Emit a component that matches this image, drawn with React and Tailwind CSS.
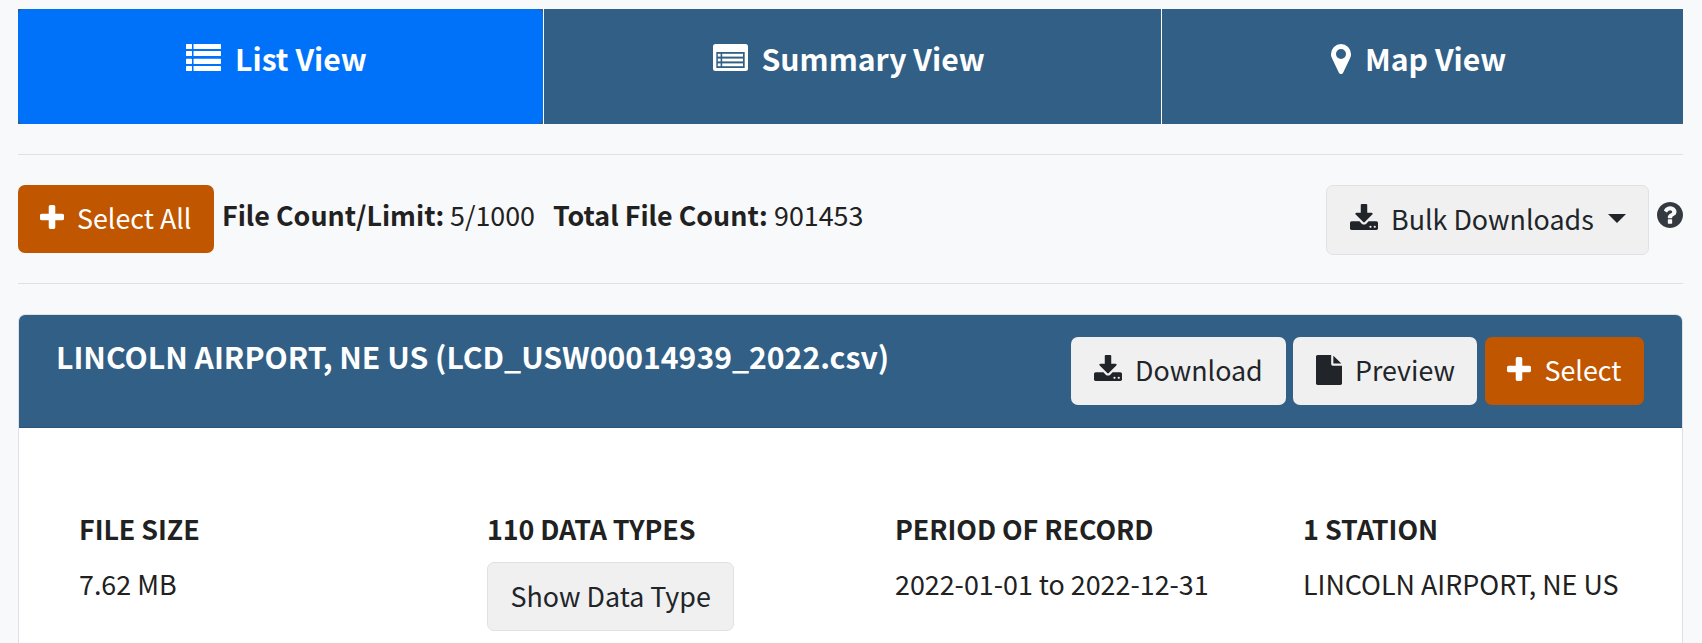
import React from "react";

const PATHS = {
  download:
    "M1344 1344q0-26-19-45t-45-19-45 19-19 45 19 45 45 19 45-19 19-45zm256 0q0-26-19-45t-45-19-45 19-19 45 19 45 45 19 45-19 19-45zm128-224v320q0 40-28 68t-68 28h-1472q-40 0-68-28t-28-68v-320q0-40 28-68t68-28h465l135 136q58 56 136 56t136-56l136-136h464q40 0 68 28t28 68zm-325-569q17 41-14 70l-448 448q-18 19-45 19t-45-19l-448-448q-31-29-14-70 17-39 59-39h256v-448q0-26 19-45t45-19h256q26 0 45 19t19 45v448h256q42 0 59 39z",
  plus: "M1600 736v192q0 40-28 68t-68 28h-416v416q0 40-28 68t-68 28h-192q-40 0-68-28t-28-68v-416h-416q-40 0-68-28t-28-68v-192q0-40 28-68t68-28h416v-416q0-40 28-68t68-28h192q40 0 68 28t28 68v416h416q40 0 68 28t28 68z",
  question:
    "M1024 1376v-192q0-14-9-23t-23-9h-192q-14 0-23 9t-9 23v192q0 14 9 23t23 9h192q14 0 23-9t9-23zm256-672q0-88-55.5-163t-138.5-116-170-41q-243 0-371 213-15 24 8 42l132 100q7 6 19 6 16 0 25-12 53-68 86-92 34-24 86-24 48 0 85.5 26t37.5 59q0 38-20 61t-68 45q-63 28-115.5 86.5t-52.5 125.5v36q0 14 9 23t23 9h192q14 0 23-9t9-23q0-19 21.5-49.5t54.5-49.5q32-18 49-28.5t46-35 44.5-48 28-60.5 12.5-81zm384 192q0 209-103 385.5t-279.5 279.5-385.5 103-385.5-103-279.5-279.5-103-385.5 103-385.5 279.5-279.5 385.5-103 385.5 103 279.5 279.5 103 385.5z",
  marker:
    "M1152 640q0-106-75-181t-181-75-181 75-75 181 75 181 181 75 181-75 75-181zm256 0q0 109-33 179l-364 774q-16 33-47.5 52t-67.5 19-67.5-19-46.5-52l-365-774q-33-70-33-179 0-212 150-362t362-150 362 150 150 362z",
  file: "M1152 512v-472q22 14 36 28l408 408q14 14 28 36h-472zm-128 32q0 40 28 68t68 28h544v1056q0 40-28 68t-68 28h-1344q-40 0-68-28t-28-68v-1600q0-40 28-68t68-28h800v544z",
};

const BOX = {
  download: "64 0 1664 1536",
  plus: "192 128 1408 1408",
  question: "128 128 1536 1536",
  marker: "384 128 1024 1536",
  file: "128 0 1536 1792",
};

function Icon({ name, className }) {
  return (
    <svg viewBox={BOX[name]} preserveAspectRatio="none" fill="currentColor" className={`block shrink-0 ${className}`} aria-hidden="true">
      <path d={PATHS[name]} />
    </svg>
  );
}

function ListIcon() {
  return (
    <svg viewBox="0 0 35 27" fill="currentColor" className="block h-[27px] w-[35px] shrink-0" aria-hidden="true">
      {[0, 7, 14.8, 22].map((y) => (
        <g key={y}>
          <rect x="0" y={y} width="6" height="5.1" rx="0.6" />
          <rect x="7.5" y={y} width="27.5" height="5.1" rx="0.6" />
        </g>
      ))}
    </svg>
  );
}

function ListAltIcon() {
  return (
    <svg viewBox="0 0 35 27" fill="currentColor" className="block h-[27px] w-[35px] shrink-0" aria-hidden="true">
      <path fillRule="evenodd" d="M2.5 0h30a2.5 2.5 0 0 1 2.5 2.5v22a2.5 2.5 0 0 1-2.5 2.5h-30a2.5 2.5 0 0 1-2.5-2.5v-22a2.5 2.5 0 0 1 2.5-2.5zM3.3 8v16h28.4v-16z" />
      {[9.8, 14.6, 19.4].map((y) => (
        <g key={y}>
          <rect x="4.8" y={y} width="2.8" height="2.8" />
          <rect x="9.2" y={y} width="20.8" height="2.8" />
        </g>
      ))}
    </svg>
  );
}

const FIELD = "text-[26.85px] leading-[40px] whitespace-nowrap";

export default function App() {
  return (
    <div className="h-[643px] w-[1702px] overflow-hidden bg-[#f8f9fb] px-[18px] pt-[9px] pr-[19px] font-['Noto_Sans_CJK_JP','Noto_Sans',sans-serif] text-[#212121]">
      <nav className="flex h-[115px] gap-px bg-white text-[30.2px] leading-[42px] font-bold whitespace-nowrap text-white">
        <div className="w-[525px] bg-[#315f86]">
          <a className="flex h-full rounded-[6px] bg-[#0072f9] pt-[35px] pl-[168px]">
            <ListIcon />
            <span className="-mt-[7px] ml-[14px]">List View</span>
          </a>
        </div>
        <a className="flex w-[617px] bg-[#315f86] pt-[35px] pl-[169px]">
          <ListAltIcon />
          <span className="-mt-[7px] ml-[13.5px]">Summary View</span>
        </a>
        <a className="flex flex-1 bg-[#315f86] pt-[35px] pl-[169px]">
          <Icon name="marker" className="h-[30px] w-[20px]" />
          <span className="-mt-[7px] ml-[14px]">Map View</span>
        </a>
      </nav>

      <div className="mt-[30px] flex h-[130px] items-start border-y border-[#dee2e6] pt-[30px]">
        <button className="flex h-[68px] w-[196px] rounded-[7px] bg-[#c15600] pl-[22px] text-white">
          <Icon name="plus" className="mt-[20px] h-[24px] w-[24px]" />
          <span className={`${FIELD} mt-[13px] ml-[13px]`}>Select All</span>
        </button>
        <div className={`${FIELD} mt-[10px] ml-[8px] flex`}>
          <b className="w-[228px]">File Count/Limit:</b>
          <span className="w-[103px]">5/1000</span>
          <b className="w-[221px]">Total File Count:</b>
          <span>901453</span>
        </div>
        <button className="ml-auto flex h-[70px] w-[323px] rounded-[7px] border border-[#dee2e6] bg-[#f0f0f0] pl-[23px] text-[#212529]">
          <Icon name="download" className="mt-[18px] h-[26px] w-[28px]" />
          <span className={`${FIELD} mt-[13px] ml-[13px] w-[202px]`}>Bulk Downloads</span>
          <svg viewBox="0 0 18 9" className="mt-[28px] ml-[15px] h-[9px] w-[18px]" fill="currentColor" aria-hidden="true">
            <path d="M0 0h18l-9 9z" />
          </svg>
        </button>
        <Icon name="question" className="mt-[17px] ml-[8px] h-[26px] w-[26px] text-[#343a40]" />
      </div>

      <section className="mt-[30px] h-[400px] overflow-hidden rounded-t-[7px] border border-[#dee0e3] bg-white">
        <header className="flex h-[113px] items-start border-b border-[#2b547a] bg-[#315f86] pt-[22px] pl-[37px]">
          <h2 className="-mt-[2px] text-[30.15px] leading-[42px] font-bold whitespace-nowrap text-white">LINCOLN AIRPORT, NE US (LCD_USW00014939_2022.csv)</h2>
          <div className="mr-[38px] ml-auto flex text-[#212529]">
            <button className="flex h-[68px] w-[215px] rounded-[7px] bg-[#f0f0f0] pl-[23px]">
              <Icon name="download" className="mt-[18px] h-[26px] w-[28px]" />
              <span className={`${FIELD} mt-[13px] ml-[13px]`}>Download</span>
            </button>
            <button className="ml-[7px] flex h-[68px] w-[184px] rounded-[7px] bg-[#f0f0f0] pl-[23px]">
              <Icon name="file" className="mt-[18px] h-[30px] w-[26px]" />
              <span className={`${FIELD} mt-[13px] ml-[13px]`}>Preview</span>
            </button>
            <button className="ml-[8px] flex h-[68px] w-[159px] rounded-[7px] bg-[#c15600] pl-[22px] text-white">
              <Icon name="plus" className="mt-[20px] h-[24px] w-[24px]" />
              <span className={`${FIELD} mt-[13px] ml-[13.5px]`}>Select</span>
            </button>
          </div>
        </header>
        <div className={`${FIELD} grid grid-cols-[408px_408px_408px_1fr] pt-[81px] pl-[60px]`}>
          <div>
            <h3 className="font-bold tracking-[-0.07px]">FILE SIZE</h3>
            <p className="mt-[15px]">7.62 MB</p>
          </div>
          <div>
            <h3 className="font-bold tracking-[-0.07px]">110 DATA TYPES</h3>
            <button className="mt-[13px] block h-[69px] w-[247px] rounded-[7px] border border-[#dee2e6] bg-[#f0f0f0] pb-px pl-[22.5px] text-left text-[#212529]">Show Data Type</button>
          </div>
          <div>
            <h3 className="font-bold tracking-[-0.07px]">PERIOD OF RECORD</h3>
            <p className="mt-[15px]">2022-01-01 to 2022-12-31</p>
          </div>
          <div>
            <h3 className="font-bold">1 STATION</h3>
            <p className="mt-[15px]">LINCOLN AIRPORT, NE US</p>
          </div>
        </div>
      </section>
    </div>
  );
}
